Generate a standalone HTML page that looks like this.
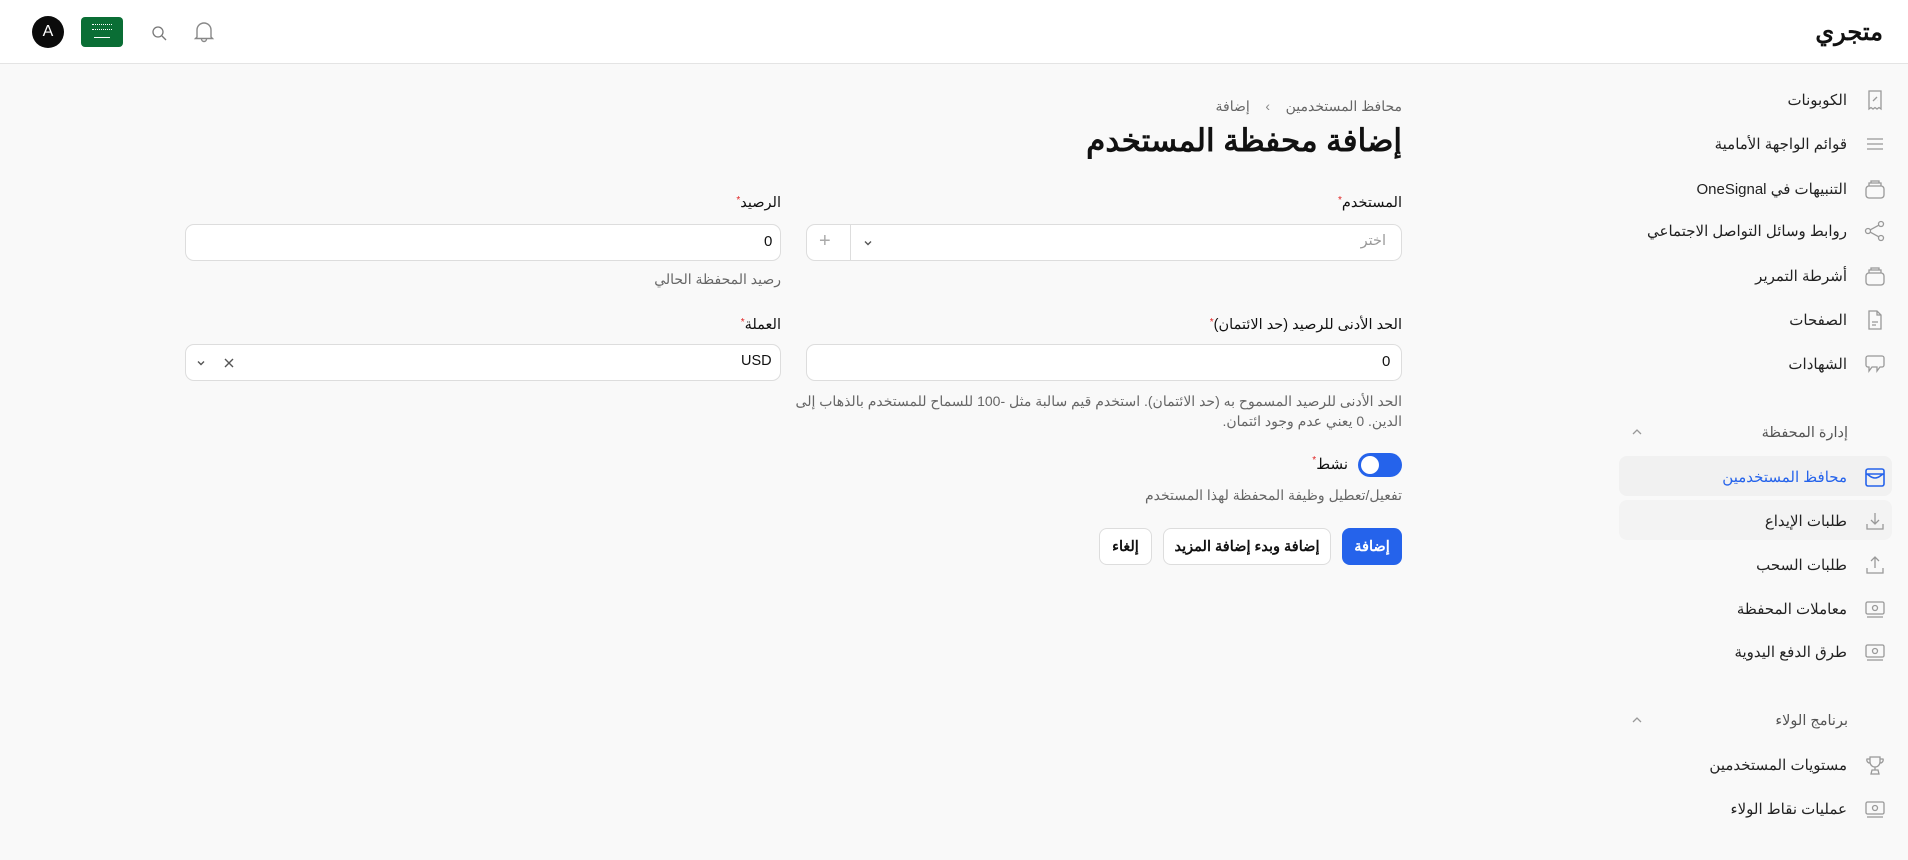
<!DOCTYPE html>
<html lang="ar" dir="rtl"><head><meta charset="utf-8">
<style>
*{box-sizing:border-box;margin:0;padding:0}
body{width:1908px;height:860px;background:#f9f9f9;font-family:"Liberation Sans","Noto Sans CJK SC",sans-serif;color:#111;position:relative;overflow:hidden}
.a{position:absolute}
.hdr{left:0;top:0;width:1908px;height:64px;background:#fff;border-bottom:1px solid #e4e4e4}
.t{white-space:nowrap;direction:rtl}
.si{right:61px;font-size:15px;color:#222;text-align:right}
.ic{right:22px;width:22px;height:22px}
.lbl{font-size:14.5px;color:#111}
.req{color:#e02424;font-size:10px;vertical-align:top}
.inp{background:#fff;border:1px solid #ddd;border-radius:9px;height:37px}
.hint{font-size:14px;color:#666}
.btn{height:37px;border-radius:8px;font-size:14.5px;font-weight:bold;display:flex;align-items:center;justify-content:center}
</style></head><body>
<div class="a hdr"></div>
<div class="a t" style="right:25px;top:18px;font-size:24px;font-weight:bold">متجري</div>
<div class="a" style="left:32px;top:16px;width:32px;height:32px;border-radius:50%;background:#0b0b0b;color:#fff;font-size:16px;text-align:center;line-height:32px">A</div>
<div class="a" style="left:81px;top:17px;width:42px;height:30px;border-radius:4px;background:#0a6e35"><div class="a" style="left:11px;top:7px;width:20px;height:6px;border-top:1px dotted #fff;border-bottom:1px dotted #fff"></div><div class="a" style="left:13px;top:20px;width:16px;height:1px;background:#fff"></div></div>
<svg class="a" style="left:150px;top:24px" width="18" height="18" viewBox="0 0 18 18" fill="none" stroke="#777" stroke-width="1.3"><circle cx="8" cy="8" r="5"/><path d="M12 12l4 4"/></svg>
<svg class="a" style="left:193px;top:20px" width="22" height="24" viewBox="0 0 22 24" fill="none" stroke="#888" stroke-width="1.4"><path d="M4 17V10a7 7 0 0114 0v7l1.5 1.5h-17z"/><path d="M8.5 19a2.5 2.5 0 005 0"/></svg>

<!-- sidebar -->
<div class="a" style="left:1619px;top:456px;width:273px;height:40px;background:#f1f1f1;border-radius:8px"></div>
<div class="a" style="left:1619px;top:500px;width:273px;height:40px;background:#f3f3f3;border-radius:8px"></div>

<svg class="a ic" style="top:89px" viewBox="0 0 22 22" fill="none" stroke="#999" stroke-width="1.3"><path d="M5 2h12v18l-2-1.5-2 1.5-2-1.5-2 1.5-2-1.5-2 1.5z"/><path d="M9 12l4-4M9 8.5h.1M13 11.5h.1"/></svg>
<div class="a t si" style="top:91px">الكوبونات</div>
<svg class="a ic" style="top:133px" viewBox="0 0 22 22" fill="none" stroke="#999" stroke-width="1.3"><path d="M3 6h16M3 11h16M3 16h16"/></svg>
<div class="a t si" style="top:135px">قوائم الواجهة الأمامية</div>
<svg class="a ic" style="top:178px" viewBox="0 0 22 22" fill="none" stroke="#999" stroke-width="1.3"><rect x="2" y="8" width="18" height="12" rx="3"/><path d="M5 8V5h12v3M7 5V3h8v2"/></svg>
<div class="a t si" style="top:180px">التنبيهات في OneSignal</div>
<svg class="a ic" style="top:220px" viewBox="0 0 22 22" fill="none" stroke="#999" stroke-width="1.3"><circle cx="17" cy="4" r="2.5"/><circle cx="17" cy="18" r="2.5"/><circle cx="4" cy="11" r="2.5"/><path d="M6.3 9.8l8.5-4.6M6.3 12.2l8.5 4.6"/></svg>
<div class="a t si" style="top:222px">روابط وسائل التواصل الاجتماعي</div>
<svg class="a ic" style="top:265px" viewBox="0 0 22 22" fill="none" stroke="#999" stroke-width="1.3"><rect x="2" y="8" width="18" height="12" rx="3"/><path d="M5 8V5h12v3M7 5V3h8v2"/></svg>
<div class="a t si" style="top:267px">أشرطة التمرير</div>
<svg class="a ic" style="top:309px" viewBox="0 0 22 22" fill="none" stroke="#999" stroke-width="1.3"><path d="M5 2h8l4 4v14H5z"/><path d="M13 2v4h4M8 13h6M8 16h4"/></svg>
<div class="a t si" style="top:311px">الصفحات</div>
<svg class="a ic" style="top:353px" viewBox="0 0 22 22" fill="none" stroke="#999" stroke-width="1.3"><path d="M4 3h14a2 2 0 012 2v7a2 2 0 01-2 2h-2l-3 4v-4H8l-3 4v-4H4a2 2 0 01-2-2V5a2 2 0 012-2z"/></svg>
<div class="a t si" style="top:355px">الشهادات</div>

<div class="a t" style="right:60px;top:425px;font-size:14.5px;color:#555">إدارة المحفظة</div>
<svg class="a" style="left:1630px;top:427px" width="14" height="10" viewBox="0 0 14 10" fill="none" stroke="#999" stroke-width="1.3"><path d="M3 7l4-4 4 4"/></svg>

<svg class="a ic" style="top:466px" viewBox="0 0 22 22" fill="none" stroke="#2563eb" stroke-width="1.6"><rect x="2" y="3" width="18" height="17" rx="2"/><path d="M2 8h18M2 8c3 0 4 4 9 4s6-4 9-4"/></svg>
<div class="a t si" style="top:468px;color:#2563eb">محافظ المستخدمين</div>
<svg class="a ic" style="top:510px" viewBox="0 0 22 22" fill="none" stroke="#999" stroke-width="1.3"><path d="M3 14v5h16v-5M11 3v11M7 10l4 4 4-4"/></svg>
<div class="a t si" style="top:512px">طلبات الإيداع</div>
<svg class="a ic" style="top:554px" viewBox="0 0 22 22" fill="none" stroke="#999" stroke-width="1.3"><path d="M3 14v5h16v-5M11 14V3M7 7l4-4 4 4"/></svg>
<div class="a t si" style="top:556px">طلبات السحب</div>
<svg class="a ic" style="top:598px" viewBox="0 0 22 22" fill="none" stroke="#999" stroke-width="1.3"><rect x="2" y="4" width="18" height="12" rx="1.5"/><circle cx="11" cy="10" r="2.5"/><path d="M3 19h16"/></svg>
<div class="a t si" style="top:600px">معاملات المحفظة</div>
<svg class="a ic" style="top:641px" viewBox="0 0 22 22" fill="none" stroke="#999" stroke-width="1.3"><rect x="2" y="4" width="18" height="12" rx="1.5"/><circle cx="11" cy="10" r="2.5"/><path d="M3 19h16"/></svg>
<div class="a t si" style="top:643px">طرق الدفع اليدوية</div>

<div class="a t" style="right:60px;top:713px;font-size:14.5px;color:#555">برنامج الولاء</div>
<svg class="a" style="left:1630px;top:715px" width="14" height="10" viewBox="0 0 14 10" fill="none" stroke="#999" stroke-width="1.3"><path d="M3 7l4-4 4 4"/></svg>
<svg class="a ic" style="top:754px" viewBox="0 0 22 22" fill="none" stroke="#999" stroke-width="1.3"><path d="M6 3h10v5a5 5 0 01-10 0zM6 5H3a3 3 0 003 4M16 5h3a3 3 0 01-3 4M11 13v3M7 20l1-4h6l1 4z"/></svg>
<div class="a t si" style="top:756px">مستويات المستخدمين</div>
<svg class="a ic" style="top:798px" viewBox="0 0 22 22" fill="none" stroke="#999" stroke-width="1.3"><rect x="2" y="4" width="18" height="12" rx="1.5"/><circle cx="11" cy="10" r="2.5"/><path d="M3 19h16"/></svg>
<div class="a t si" style="top:800px">عمليات نقاط الولاء</div>

<!-- main -->
<div class="a t" style="right:506px;top:98px;font-size:14px;color:#666">محافظ المستخدمين &nbsp;&nbsp;&nbsp;<span style="color:#888">&#x203A;</span>&nbsp;&nbsp;&nbsp; إضافة</div>
<div class="a t" style="right:506px;top:123px;font-size:31px;font-weight:bold;color:#111">إضافة محفظة المستخدم</div>

<div class="a t lbl" style="right:506px;top:195px">المستخدم<span class="req">*</span></div>
<div class="a inp" style="left:806px;top:224px;width:596px"></div>
<div class="a t" style="right:522px;top:233px;font-size:14.5px;color:#999">اختر</div>
<div class="a" style="left:850px;top:224px;width:1px;height:37px;background:#ddd"></div>
<div class="a" style="left:819px;top:230px;font-size:20px;color:#aaa;font-weight:300">+</div>
<svg class="a" style="left:862px;top:237px" width="12" height="12" viewBox="0 0 12 12" fill="none" stroke="#555" stroke-width="1.4"><path d="M3 4.5l3 3 3-3"/></svg>

<div class="a t lbl" style="right:1127px;top:195px">الرصيد<span class="req">*</span></div>
<div class="a inp" style="left:185px;top:224px;width:596px"></div>
<div class="a" style="left:764px;top:233px;font-size:15px">0</div>
<div class="a t hint" style="right:1127px;top:271px">رصيد المحفظة الحالي</div>

<div class="a t lbl" style="right:506px;top:317px">الحد الأدنى للرصيد (حد الائتمان)<span class="req">*</span></div>
<div class="a inp" style="left:806px;top:344px;width:596px"></div>
<div class="a" style="left:1382px;top:353px;font-size:15px">0</div>
<div class="a hint" style="right:506px;top:391px;width:620px;text-align:right;line-height:20px;direction:rtl">الحد الأدنى للرصيد المسموح به (حد الائتمان). استخدم قيم سالبة مثل -100 للسماح للمستخدم بالذهاب إلى الدين. 0 يعني عدم وجود ائتمان.</div>

<div class="a t lbl" style="right:1127px;top:317px">العملة<span class="req">*</span></div>
<div class="a inp" style="left:185px;top:344px;width:596px"></div>
<div class="a" style="left:741px;top:353px;font-size:14.5px">USD</div>
<svg class="a" style="left:195px;top:357px" width="12" height="12" viewBox="0 0 12 12" fill="none" stroke="#555" stroke-width="1.4"><path d="M3 4.5l3 3 3-3"/></svg>
<svg class="a" style="left:222px;top:356px" width="14" height="14" viewBox="0 0 14 14" fill="none" stroke="#555" stroke-width="1.4"><path d="M3 3l8 8M11 3l-8 8"/></svg>

<div class="a" style="left:1358px;top:453px;width:44px;height:24px;border-radius:12px;background:#2563eb"></div>
<div class="a" style="left:1361px;top:456px;width:18px;height:18px;border-radius:50%;background:#fff"></div>
<div class="a t" style="right:560px;top:455px;font-size:15px">نشط<span class="req">*</span></div>
<div class="a t hint" style="right:506px;top:487px">تفعيل/تعطيل وظيفة المحفظة لهذا المستخدم</div>

<div class="a btn" style="left:1342px;top:528px;width:60px;background:#2563eb;color:#fff">إضافة</div>
<div class="a btn" style="left:1163px;top:528px;width:168px;background:#fff;border:1px solid #ddd;color:#111">إضافة وبدء إضافة المزيد</div>
<div class="a btn" style="left:1099px;top:528px;width:53px;background:#fff;border:1px solid #ddd;color:#111">إلغاء</div>
</body></html>
